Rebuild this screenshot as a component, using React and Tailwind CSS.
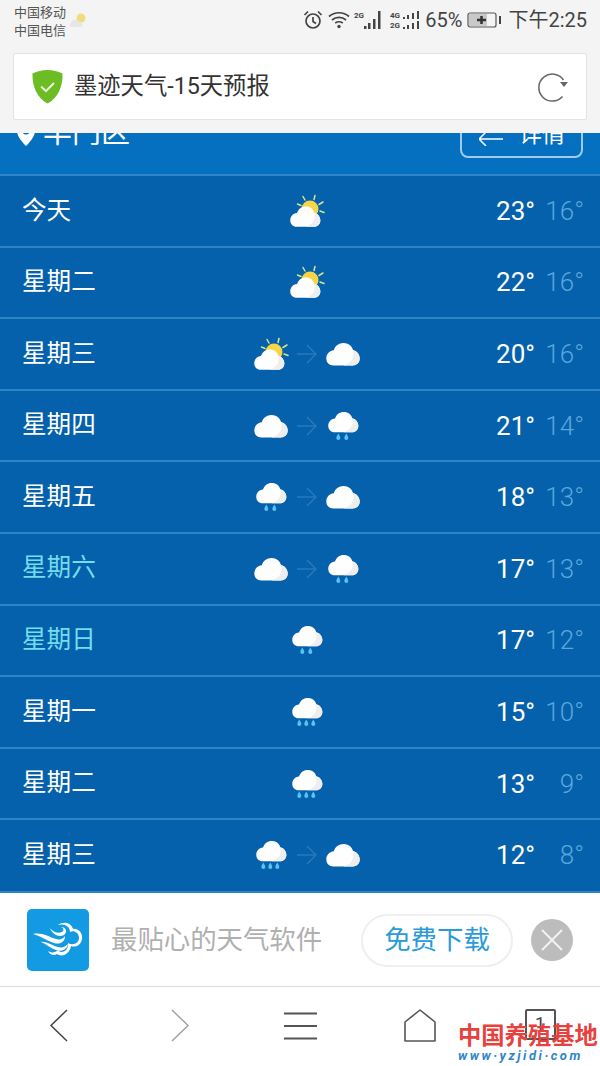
import React from 'react';

const days = [
    { name: '今天', icons: ['sun'], high: 23, low: 16 },
    { name: '星期二', icons: ['sun'], high: 22, low: 16 },
    { name: '星期三', icons: ['sun', 'cloud'], high: 20, low: 16 },
    { name: '星期四', icons: ['cloud', 'rain2'], high: 21, low: 14 },
    { name: '星期五', icons: ['rain2', 'cloud'], high: 18, low: 13 },
    { name: '星期六', icons: ['cloud', 'rain2'], high: 17, low: 13, weekend: true },
    { name: '星期日', icons: ['rain2'], high: 17, low: 12, weekend: true },
    { name: '星期一', icons: ['rain3'], high: 15, low: 10 },
    { name: '星期二', icons: ['rain3'], high: 13, low: 9 },
    { name: '星期三', icons: ['rain3', 'cloud'], high: 12, low: 8 },
];

const cloudPath = 'M7.500 23C3.200 23 .3 19.800 .3 16C.3 12 3 8.300 7.800 7.800C9 3.500 12.800 .5 17.500 .5C22.500 .5 26 3.500 27 7.500C31 8.500 33.700 12 33.700 16C33.700 19.800 30.800 23 26.500 23Z';

function CloudShape({ x = 0, y = 0, scale = 1 }) {
    return (
        <g transform={`translate(${x} ${y}) scale(${scale})`}>
            <path d={cloudPath} fill="#fefefe" />
            <path d="M27 7.500C31 8.500 33.700 12 33.700 16C33.700 19.800 30.800 23 26.500 23H17C24 21.500 29 16 27 7.500Z" fill="#eeeeee" />
        </g>
    );
}

function Drop({ x, y }) {
    return <path d={`M${x + 1.800} ${y}C${x + 2.800} ${y + 2} ${x + 3.800} ${y + 3} ${x + 3.800} ${y + 4.500}A2 2 0 0 1 ${x - .2} ${y + 4.500}C${x - .2} ${y + 3} ${x + .8} ${y + 2} ${x + 1.800} ${y}Z`} fill="#58c3f2" />;
}

function WeatherIcon({ type }) {
    if (type === 'sun') {
        return (
            <svg width="36" height="34" viewBox="0 0 36 34" className="block">
                <circle cx="21" cy="15" r="8.500" fill="#f6d548" />
                <g stroke="#d6e58c" strokeWidth="1.500" strokeLinecap="round">
                    <path d="M14 2.500L16 6" />
                    <path d="M26 1.500L25 5.500" />
                    <path d="M34 8L30 10.500" />
                    <path d="M35 18.500L31 17" />
                    <path d="M8.500 10L12 11.500" />
                </g>
                <CloudShape x={1} y={12} scale={0.9} />
            </svg>
        );
    }
    if (type === 'cloud') {
        return (
            <svg width="36" height="24" viewBox="0 0 36 24" className="block">
                <CloudShape x={1} y={0.500} />
            </svg>
        );
    }
    const drops = type === 'rain3' ? [8.500, 15.500, 22.500] : [11.500, 19.500];
    return (
        <svg width="36" height="30" viewBox="0 0 36 30" className="block">
            <CloudShape x={3} y={0.500} scale={0.9} />
            {drops.map(x => <Drop key={x} x={x} y={22.500} />)}
        </svg>
    );
}

function ForecastRow({ day }) {
    return (
        <div className="flex items-center h-[71.6px] border-t-2 border-[#3083c4] pl-[22px] pr-[16px]">
            <div className={`w-[201px] text-[24.600px] leading-none ${day.weekend ? 'text-[#74dcec]' : 'text-white'}`}>{day.name}</div>
            <div className="w-[168px] flex items-center justify-center gap-2">
                <WeatherIcon type={day.icons[0]} />
                {day.icons[1] && (
                    <>
                        <svg width="20" height="20" viewBox="0 0 20 20" fill="none" stroke="#2a78bb" strokeWidth="1.500" className="block">
                            <path d="M0 10H19M10 1L19 10L10 19" />
                        </svg>
                        <WeatherIcon type={day.icons[1]} />
                    </>
                )}
            </div>
            <div className="flex-1 flex justify-end font-['Roboto'] text-[26px] leading-none">
                <span className="text-white">{day.high}°</span>
                <span className="w-[49px] text-right font-light text-[#5aa6dd]">{day.low}°</span>
            </div>
        </div>
    );
}

function StatusBar() {
    return (
        <div className="h-[53px] flex items-start justify-between pl-[14px] pr-[13px] pt-[4px]">
            <div className="flex items-start">
                <div className="text-[13px] leading-[18px] text-[#555]">
                    <div>中国移动</div>
                    <div>中国电信</div>
                </div>
                <svg width="20" height="16" viewBox="0 0 20 16" className="mt-[8px] ml-[2px]">
                    <circle cx="13" cy="6" r="4.500" fill="#f2dc80" />
                    <path d="M4 15C1.500 15 1 12 3 11C3.500 7.500 9 6.500 11 9.500C14 9 16 13 13.500 15Z" fill="#e6e6e6" />
                </svg>
            </div>
            <div className="flex items-center h-[32px] text-[#444]">
                <svg width="20" height="20" viewBox="0 0 20 20" fill="none" stroke="#444" strokeWidth="1.700">
                    <circle cx="10" cy="11" r="7" />
                    <path d="M10 7V11.500L13 13.500M1.500 5L5 1.500M18.500 5L15 1.500" />
                </svg>
                <svg width="22" height="20" viewBox="0 0 22 20" fill="none" stroke="#444" strokeWidth="1.700" className="ml-[5px]">
                    <path d="M1 6.500C6.500 1.500 15.500 1.500 21 6.500M4 10C8 6.500 14 6.500 18 10M7.200 13C9.500 11.500 12.500 11.500 14.800 13" />
                    <circle cx="11" cy="16.500" r="1.700" fill="#444" stroke="none" />
                </svg>
                <svg width="30" height="20" viewBox="0 0 30 20" fill="#444" className="ml-[4px]">
                    <rect x="10" y="16" width="2.500" height="3" />
                    <rect x="14" y="13" width="2.500" height="6" />
                    <rect x="19" y="9" width="2.500" height="10" />
                    <rect x="24" y="1" width="2.500" height="18" />
                    <text x="0" y="8" fontSize="8" fontWeight="bold" fontFamily="Roboto">2G</text>
                </svg>
                <svg width="32" height="20" viewBox="0 0 32 20" fill="#444" className="ml-[6px]">
                    <text x="0" y="8" fontSize="8" fontWeight="bold" fontFamily="Roboto">4G</text>
                    <text x="0" y="18" fontSize="8" fontWeight="bold" fontFamily="Roboto">2G</text>
                    <path d="M13 7h2v2h-2zM17 5h2v4h-2zM22 3h2v6h-2zM27 1h2v8h-2zM13 17h2v2h-2zM17 15h2v4h-2zM22 13h2v6h-2zM27 11h2v8h-2z" />
                </svg>
                <span className="font-['Roboto'] text-[20px] leading-none ml-[3px]">65%</span>
                <svg width="36" height="18" viewBox="0 0 36 18" className="ml-[5px]">
                    <rect x="1" y="2" width="28" height="14" rx="2" fill="none" stroke="#555" strokeWidth="1.200" />
                    <rect x="2" y="3" width="18" height="12" fill="#c9c9c9" />
                    <path d="M10 9H19M14.500 5V13" stroke="#333" strokeWidth="2.500" />
                    <rect x="32" y="5" width="2" height="8" fill="#444" />
                </svg>
                <span className="text-[20px] leading-none whitespace-nowrap ml-[5px]">下午2:25</span>
            </div>
        </div>
    );
}

function AddressBar() {
    return (
        <div className="h-[67px] flex items-center justify-between bg-white border border-[#e3e3e3] rounded-[2px] pl-[18px] pr-[17px]">
            <div className="flex items-center gap-[11px]">
                <svg width="31" height="34" viewBox="0 0 31 34">
                    <path d="M15.500 0C21 0 26 1.500 30.500 3.500C31 16 26 28 15.500 33.500C5 28 0 16 .5 3.500C5 1.500 10 0 15.500 0Z" fill="#6cbc24" />
                    <path d="M9 16.500L14 21L22 13" fill="none" stroke="#e8f5d8" strokeWidth="2" />
                </svg>
                <span className="text-[23.300px] leading-none text-[#333]">墨迹天气-15天预报</span>
            </div>
            <svg width="32" height="32" viewBox="0 0 32 32" fill="none">
                <path d="M26.500 9A13.500 13.500 0 1 0 25.500 25.500" stroke="#666" strokeWidth="1.500" />
                <path d="M23 11H31L27 16Z" fill="#666" />
            </svg>
        </div>
    );
}

function MojiLogo() {
    return (
        <div className="w-[62px] h-[62px] rounded-[5px] bg-[#129ae3] flex items-center justify-center">
            <svg width="50" height="36" viewBox="0 0 50 36" fill="#fff">
                <path d="M0 12C9 10 16 15 23 17C27 18 30 17 32 14C32 20 27 23 21 21C14 19 8 14 0 12Z" />
                <path d="M8 20C14 19 19 24 25 25C29 26 32 25 35 22C34 28 28 30 23 28C17 26 13 22 8 20Z" />
                <path d="M17 6C20 10 25 12 29 10C31 9 31 6 28 5C33 5 35 10 31 13C26 16 19 12 17 6Z" />
                <path d="M25 3C30 -1 38 0 40 7C45 6 50 11 49 17C48 23 43 26 38 24C37 31 30 36 24 32C21 34 17 33 15 29C18 31 22 31 25 28C29 33 36 28 35 21C40 24 46 21 46 16C46 11 41 8 37 10C37 4 31 1 25 3Z" />
            </svg>
        </div>
    );
}

function AppBanner() {
    return (
        <div className="h-[94px] flex items-center bg-white border-b border-[#dcdcdc] pl-[27px] pt-[1px]">
            <MojiLogo />
            <span className="ml-[22px] w-[250px] whitespace-nowrap text-[26.400px] leading-none text-[#b0b0b0]">最贴心的天气软件</span>
            <div className="w-[152px] h-[53px] flex items-center justify-center rounded-full border-2 border-[#efefef] text-[26.400px] leading-none text-[#2a9ad8]">免费下载</div>
            <div className="ml-[18px] w-[42px] h-[42px] rounded-full bg-[#bcbcbc] flex items-center justify-center">
                <svg width="24" height="24" viewBox="0 0 24 24" stroke="#f4f4f4" strokeWidth="1.800">
                    <path d="M2 2L22 22M22 2L2 22" />
                </svg>
            </div>
        </div>
    );
}

function BottomNav() {
    return (
        <div className="relative h-[79px] bg-white grid grid-cols-5 justify-items-center items-start pt-[22px]">
            <svg width="19" height="33" viewBox="0 0 19 33" fill="none" stroke="#444" strokeWidth="1.500" className="-ml-[4px]">
                <path d="M18 1L2 16.500L18 32" />
            </svg>
            <svg width="19" height="33" viewBox="0 0 19 33" fill="none" stroke="#a3a3a3" strokeWidth="1.500">
                <path d="M1 1L17 16.500L1 32" />
            </svg>
            <svg width="33" height="30" viewBox="0 0 33 30" fill="none" stroke="#555" strokeWidth="1.800" className="mt-[2px]">
                <path d="M0 2.500H33M0 15H33M0 27.500H33" />
            </svg>
            <svg width="32" height="33" viewBox="0 0 32 33" fill="none" stroke="#555" strokeWidth="1.600">
                <path d="M16 1L31 13V32H1V13Z" strokeLinejoin="round" />
            </svg>
            <div className="w-[31px] h-[31px] border-2 border-[#555] rounded-[2px] flex justify-center text-[18px] leading-[26px] text-[#444] font-['Roboto']">1</div>
            <div className="absolute left-[458px] top-[36px] w-[142px] font-bold">
                <div className="text-[23.300px] leading-[26px] whitespace-nowrap text-[#e8403c]">中国养殖基地</div>
                <div className="text-[13px] leading-[13px] tracking-[2.500px] italic whitespace-nowrap text-[#2f86c8] font-['Roboto']">www·yzjidi·com</div>
            </div>
        </div>
    );
}

export default function App() {
    return (
        <div className="w-[600px] h-[1066px] overflow-hidden bg-[#f4f4f4] font-['Roboto','Noto_Sans_CJK_SC',sans-serif]">
            <StatusBar />
            <div className="h-[80px] px-[13px]">
                <AddressBar />
            </div>
            <div className="h-[41px] overflow-hidden bg-[#0570bf]">
                <div className="-mt-[22px] flex items-start justify-between pl-[17px] pr-[17px]">
                    <div className="flex items-center gap-[8px] pt-[8px] text-white">
                        <svg width="18" height="24" viewBox="0 0 18 24" fill="#fff">
                            <path d="M9 0C14 0 18 4 18 9C18 14 13 20 9 24C5 20 0 14 0 9C0 4 4 0 9 0Z" />
                            <circle cx="9" cy="9" r="3.500" fill="#0570bf" />
                        </svg>
                        <span className="text-[29px] leading-none">丰门区</span>
                    </div>
                    <div className="w-[123px] h-[47px] flex items-center gap-[15px] border-2 border-[#9fcbec] rounded-[8px] pl-[17px] text-white">
                        <svg width="25" height="22" viewBox="0 0 25 22" fill="none" stroke="#fff" strokeWidth="1.500">
                            <path d="M0 15H24M7 8L0 15L7 22M1 7H24" />
                        </svg>
                        <span className="text-[23px] leading-none">详情</span>
                    </div>
                </div>
            </div>
            <div className="h-[719px] bg-[#0561ab] border-b-2 border-[#3083c4]">
                {days.map((day, i) => <ForecastRow key={i} day={day} />)}
            </div>
            <AppBanner />
            <BottomNav />
        </div>
    );
}
